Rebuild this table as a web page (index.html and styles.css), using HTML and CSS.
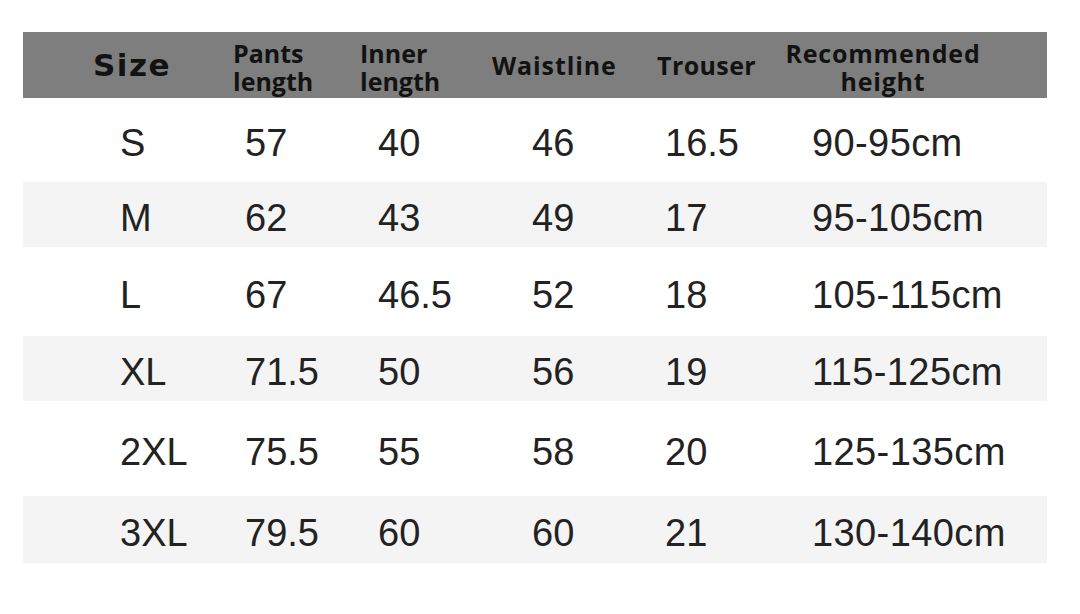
FILE: index.html
```html
<!DOCTYPE html>
<html>
<head>
<meta charset="utf-8">
<link rel="stylesheet" href="styles.css">
</head>
<body>
<div class="chart">
  <div class="row head">
    <div class="c1"><span class="size-label">Size</span></div>
    <div class="c2"><span class="hl">Pants</span><span class="hl">length</span></div>
    <div class="c3"><span class="hl">Inner</span><span class="hl">length</span></div>
    <div class="c4">Waistline</div>
    <div class="c5">Trouser</div>
    <div class="c6 center"><span class="hl">Recommended</span><span class="hl">height</span></div>
  </div>
  <div class="row body r-s">
    <div class="c1">S</div><div class="c2">57</div><div class="c3">40</div><div class="c4">46</div><div class="c5">16.5</div><div class="c6">90-95cm</div>
  </div>
  <div class="row body shade r-m">
    <div class="c1">M</div><div class="c2">62</div><div class="c3">43</div><div class="c4">49</div><div class="c5">17</div><div class="c6">95-105cm</div>
  </div>
  <div class="row body r-l">
    <div class="c1">L</div><div class="c2">67</div><div class="c3">46.5</div><div class="c4">52</div><div class="c5">18</div><div class="c6">105-115cm</div>
  </div>
  <div class="row body shade r-xl">
    <div class="c1">XL</div><div class="c2">71.5</div><div class="c3">50</div><div class="c4">56</div><div class="c5">19</div><div class="c6">115-125cm</div>
  </div>
  <div class="row body r-2xl">
    <div class="c1">2XL</div><div class="c2">75.5</div><div class="c3">55</div><div class="c4">58</div><div class="c5">20</div><div class="c6">125-135cm</div>
  </div>
  <div class="row body shade r-3xl">
    <div class="c1">3XL</div><div class="c2">79.5</div><div class="c3">60</div><div class="c4">60</div><div class="c5">21</div><div class="c6">130-140cm</div>
  </div>
</div>
</body>
</html>
```
FILE: styles.css
```css
html, body {
  margin: 0;
  padding: 0;
  background: #ffffff;
}
.chart {
  width: 1024px;
  margin: 32px 0 0 23px;
  display: flex;
  flex-direction: column;
}
.row {
  display: grid;
  grid-template-columns: 202px 130px 125px 160px 135px 272px;
  align-items: center;
}
.head {
  height: 66px;
  background: #7e7e7e;
  font-family: "Open Sans", "DejaVu Sans", sans-serif;
  font-weight: 700;
  font-size: 25px;
  letter-spacing: 0.4px;
  line-height: 28px;
  color: #121212;
  padding-top: 4px;
  box-sizing: border-box;
}
.hl {
  display: block;
  height: 28px;
}
.head .c1 { padding-left: 70px; margin-top: -4px; }
.head .c2 { padding-left: 8px; letter-spacing: 0; }
.head .c3 { padding-left: 5px; letter-spacing: 0; }
.head .c4 { padding-left: 12px; letter-spacing: 0.9px; margin-top: -4px; }
.head .c5 { padding-left: 17px; margin-top: -4px; }
.head .c6 { padding-left: 6px; letter-spacing: 0.8px; }
.head .center { text-align: center; width: 204px; }
.size-label {
  font-family: "DejaVu Sans", sans-serif;
  font-weight: 700;
  font-size: 31px;
  letter-spacing: 1.5px;
}
.body {
  font-family: "Liberation Sans", Arial, sans-serif;
  font-size: 38px;
  line-height: 1;
  color: #222222;
  padding-top: 6px;
  box-sizing: border-box;
}
.body .c1 { padding-left: 97px; }
.body .c2 { padding-left: 20px; }
.body .c3 { padding-left: 23px; }
.body .c4 { padding-left: 52px; }
.body .c5 { padding-left: 25px; }
.body .c6 { padding-left: 37px; letter-spacing: 0.4px; }
.shade { background: #f4f4f4; }
.r-s { height: 84px; }
.r-m { height: 65px; }
.r-l { height: 89px; }
.r-xl { height: 65px; }
.r-2xl { height: 95px; }
.r-3xl { height: 67px; }
```
